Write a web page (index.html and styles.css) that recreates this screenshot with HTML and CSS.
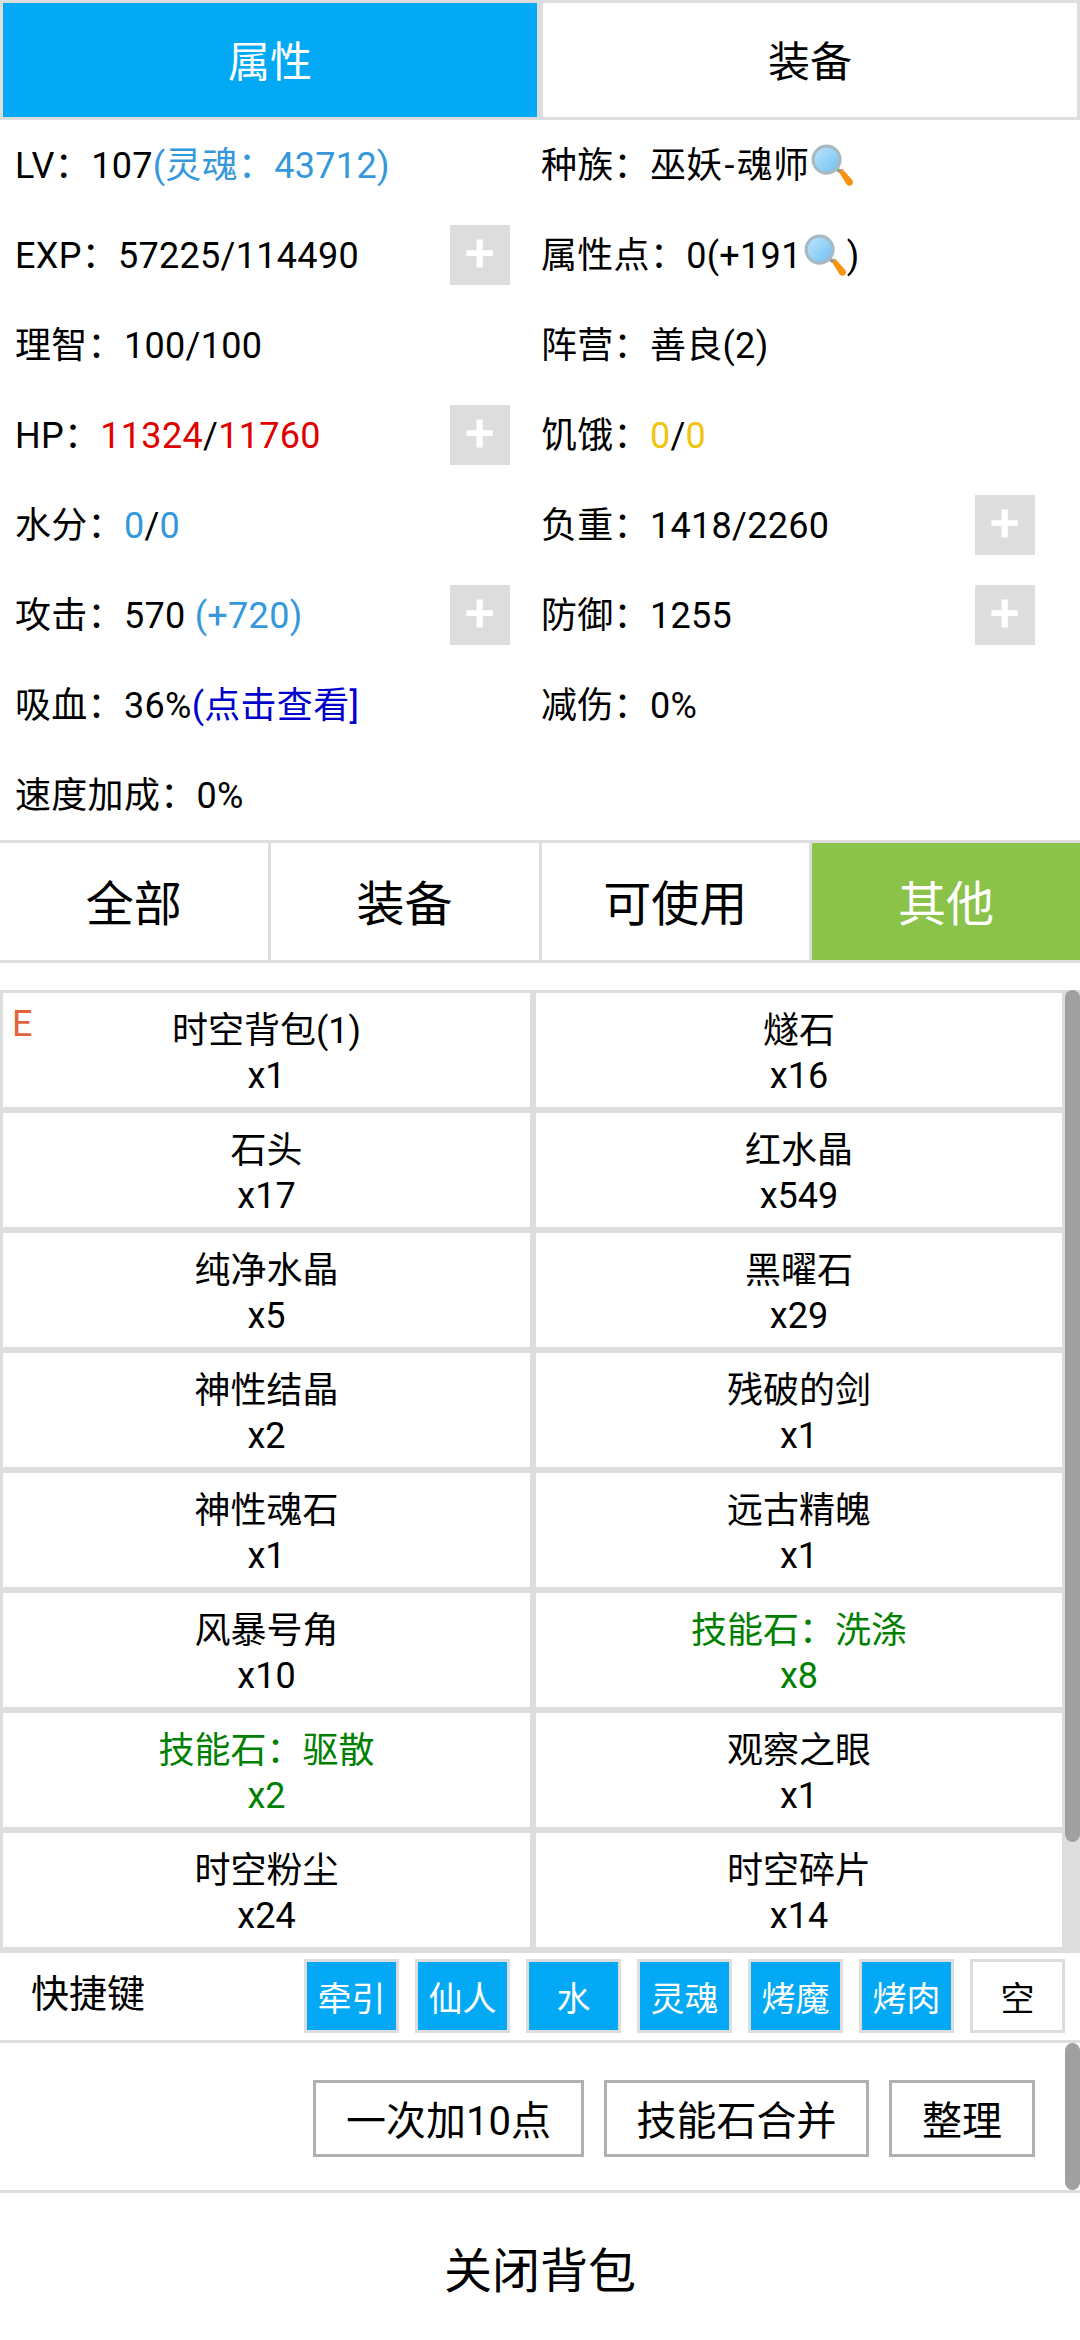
FILE: index.html
```html
<!DOCTYPE html>
<html lang="zh-CN">
<head>
    <meta charset="UTF-8">
    <meta name="viewport" content="width=device-width, initial-scale=1.0">
    <title>背包</title>
    <link rel="stylesheet" href="styles.css">
</head>
<body>
    <svg class="defs" width="0" height="0">
        <defs>
            <linearGradient id="lens" x1="0" y1="0" x2="1" y2="1">
                <stop offset="0" stop-color="#bfe6fb"/>
                <stop offset="1" stop-color="#6cc0f4"/>
            </linearGradient>
            <symbol id="mag" viewBox="0 0 40 40">
                <path d="M26 26l3-3 9 10c1.500 2 1.500 3.500 0 5-1.500 1.500-3.500 1-5-.5z" fill="#f7930e"/>
                <path d="M22 24l2-2 5 2-3 3z" fill="#9a9a8c"/>
                <circle cx="14.500" cy="14.500" r="12.500" fill="url(#lens)" stroke="#a9b9c2" stroke-width="3"/>
            </symbol>
        </defs>
    </svg>

    <div class="tabs top-tabs">
        <div class="tab active-blue"><span>属性</span></div>
        <div class="tab"><span>装备</span></div>
    </div>

    <div class="stats">
        <div class="stat"><span>LV：107<span class="blue">(灵魂：43712)</span></span></div>
        <div class="stat"><span>种族：巫妖<span class="dash">-</span>魂师<svg class="mag"><use href="#mag"/></svg></span></div>

        <div class="stat"><span>EXP：57225/114490</span><span class="plus">+</span></div>
        <div class="stat"><span>属性点：0(+191<svg class="mag"><use href="#mag"/></svg>)</span></div>

        <div class="stat"><span>理智：100/100</span></div>
        <div class="stat"><span>阵营：善良(2)</span></div>

        <div class="stat"><span>HP：<span class="red">11324</span>/<span class="red">11760</span></span><span class="plus">+</span></div>
        <div class="stat"><span>饥饿：<span class="yellow">0</span>/<span class="yellow">0</span></span></div>

        <div class="stat"><span>水分：<span class="blue">0</span>/<span class="blue">0</span></span></div>
        <div class="stat"><span>负重：1418/2260</span><span class="plus">+</span></div>

        <div class="stat"><span>攻击：570 <span class="blue">(+720)</span></span><span class="plus">+</span></div>
        <div class="stat"><span>防御：1255</span><span class="plus">+</span></div>

        <div class="stat"><span>吸血：36%<span class="navy">(点击查看]</span></span></div>
        <div class="stat"><span>减伤：0%</span></div>

        <div class="stat"><span>速度加成：0%</span></div>
    </div>

    <div class="tabs filter-tabs">
        <div class="tab">全部</div>
        <div class="tab">装备</div>
        <div class="tab">可使用</div>
        <div class="tab active-green">其他</div>
    </div>

    <div class="list-wrap">
        <div class="items">
            <div class="item"><span class="tag">E</span>时空背包(1)<br>x1</div>
            <div class="item">燧石<br>x16</div>
            <div class="item">石头<br>x17</div>
            <div class="item">红水晶<br>x549</div>
            <div class="item">纯净水晶<br>x5</div>
            <div class="item">黑曜石<br>x29</div>
            <div class="item">神性结晶<br>x2</div>
            <div class="item">残破的剑<br>x1</div>
            <div class="item">神性魂石<br>x1</div>
            <div class="item">远古精魄<br>x1</div>
            <div class="item">风暴号角<br>x10</div>
            <div class="item skill">技能石：洗涤<br>x8</div>
            <div class="item skill">技能石：驱散<br>x2</div>
            <div class="item">观察之眼<br>x1</div>
            <div class="item">时空粉尘<br>x24</div>
            <div class="item">时空碎片<br>x14</div>
        </div>
        <div class="list-track">
            <div class="scrollbar list-bar"></div>
        </div>
    </div>

    <div class="shortcuts">
        <div class="shortcut-label">快捷键</div>
        <div class="shortcut-keys">
            <div class="key on">牵引</div>
            <div class="key on">仙人</div>
            <div class="key on">水</div>
            <div class="key on">灵魂</div>
            <div class="key on">烤魔</div>
            <div class="key on">烤肉</div>
            <div class="key">空</div>
        </div>
    </div>

    <div class="actions">
        <div class="btn btn-a">一次加10点</div>
        <div class="btn btn-b">技能石合并</div>
        <div class="btn btn-c">整理</div>
        <div class="scrollbar action-bar"></div>
    </div>

    <div class="close">关闭背包</div>
</body>
</html>
```

FILE: styles.css
```css
* {
    box-sizing: border-box;
}
html, body {
    margin: 0;
    padding: 0;
}
body {
    width: 1080px;
    height: 2340px;
    overflow: hidden;
    background-color: white;
    color: black;
    font-family: 'Roboto', 'Noto Sans CJK SC', sans-serif;
    font-size: 36px;
}
.defs {
    position: absolute;
}

.tabs {
    display: flex;
}
.tab {
    display: flex;
    flex: 1;
    align-items: center;
    justify-content: center;
    border: 3px solid #ddd;
}
.top-tabs {
    height: 120px;
}
.top-tabs .tab {
    font-size: 42px;
    padding-bottom: 3px;
}
.filter-tabs {
    height: 123px;
}
.filter-tabs .tab {
    font-size: 48px;
    padding-bottom: 3px;
    border-left: none;
    border-right: 3px solid #ddd;
}
.filter-tabs .tab:last-child {
    border-right: none;
}
.active-blue {
    background-color: #03A9F4;
    color: white;
}
.active-green {
    background-color: #8BC34A;
    color: white;
}

.stats {
    display: grid;
    grid-template-columns: 526px 539px;
    grid-auto-rows: 90px;
    padding-left: 15px;
}
.stat {
    display: flex;
    align-items: center;
    justify-content: space-between;
    letter-spacing: .3px;
    white-space: nowrap;
}
.stat > span:first-child {
    margin-bottom: 6px;
}
.stat:nth-child(even) {
    padding-right: 45px;
}
.plus {
    display: flex;
    width: 60px;
    height: 60px;
    align-items: center;
    justify-content: center;
    padding-bottom: 5px;
    background-color: #ddd;
    color: white;
    font-size: 54px;
    font-weight: 500;
    margin-right: 31px;
}
.stat:nth-child(even) .plus {
    margin-right: 0;
}
.dash {
    margin: 0 2px;
}
.mag {
    width: 43px;
    height: 43px;
    margin-left: 2px;
    vertical-align: -9px;
}
.blue {
    color: #3498db;
}
.red {
    color: #e00000;
}
.yellow {
    color: #f1c40f;
}
.navy {
    color: #0000cc;
}

.list-wrap {
    position: relative;
    height: 960px;
    margin-top: 27px;
    padding-right: 15px;
    overflow: hidden;
}
.items {
    display: grid;
    grid-template-columns: 533px 532px;
    grid-auto-rows: 120px;
}
.item {
    position: relative;
    display: block;
    padding-top: 16px;
    border: 3px solid #ddd;
    line-height: 45px;
    text-align: center;
}
.skill {
    color: #008000;
}
.tag {
    position: absolute;
    top: 9px;
    left: 9px;
    color: #e2633a;
}
.list-track {
    position: absolute;
    top: 0;
    right: 0;
    width: 15px;
    height: 960px;
    background-color: #ddd;
}
.scrollbar {
    position: absolute;
    top: 0;
    right: 0;
    width: 15px;
    border-radius: 8px;
    background-color: #a0a0a0;
}
.list-bar {
    height: 852px;
}
.action-bar {
    height: 147px;
}

.shortcuts {
    display: flex;
    height: 93px;
    align-items: center;
    justify-content: space-between;
    padding: 6px 15px 7px 31px;
    border-top: 3px solid #ddd;
    border-bottom: 3px solid #ddd;
}
.shortcut-label {
    font-size: 38px;
    margin-top: -12px;
}
.shortcut-keys {
    display: flex;
    gap: 16px;
}
.key {
    display: flex;
    width: 95px;
    height: 74px;
    align-items: center;
    justify-content: center;
    border: 3px solid #ddd;
    font-size: 34px;
}
.key.on {
    background-color: #03A9F4;
    color: white;
}

.actions {
    position: relative;
    display: flex;
    height: 150px;
    justify-content: flex-end;
    align-items: center;
    gap: 20px;
    padding: 3px 45px 0 0;
    border-bottom: 3px solid #ddd;
}
.btn {
    display: flex;
    height: 77px;
    align-items: center;
    justify-content: center;
    border: 3px solid #b0b0b0;
    font-size: 40px;
}
.btn-a {
    width: 271px;
}
.btn-b {
    width: 265px;
}
.btn-c {
    width: 146px;
}

.close {
    display: flex;
    height: 147px;
    align-items: center;
    justify-content: center;
    font-size: 48px;
}
```
